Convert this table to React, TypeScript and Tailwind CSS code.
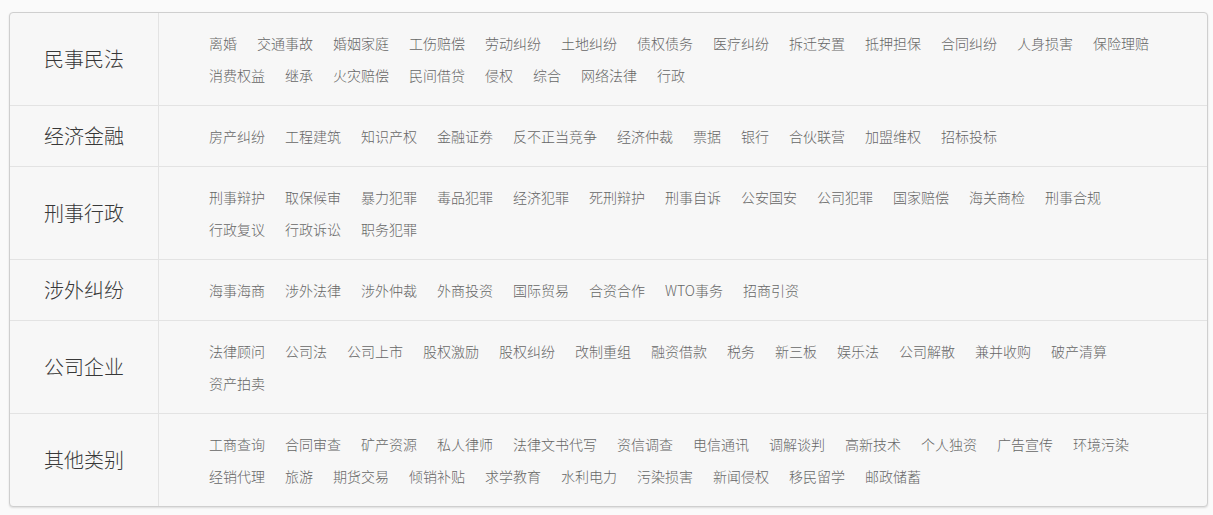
const categories: { name: string; tags: string[] }[] = [
  {
    name: '民事民法',
    tags: ['离婚', '交通事故', '婚姻家庭', '工伤赔偿', '劳动纠纷', '土地纠纷', '债权债务', '医疗纠纷', '拆迁安置', '抵押担保', '合同纠纷', '人身损害', '保险理赔', '消费权益', '继承', '火灾赔偿', '民间借贷', '侵权', '综合', '网络法律', '行政'],
  },
  {
    name: '经济金融',
    tags: ['房产纠纷', '工程建筑', '知识产权', '金融证券', '反不正当竞争', '经济仲裁', '票据', '银行', '合伙联营', '加盟维权', '招标投标'],
  },
  {
    name: '刑事行政',
    tags: ['刑事辩护', '取保候审', '暴力犯罪', '毒品犯罪', '经济犯罪', '死刑辩护', '刑事自诉', '公安国安', '公司犯罪', '国家赔偿', '海关商检', '刑事合规', '行政复议', '行政诉讼', '职务犯罪'],
  },
  {
    name: '涉外纠纷',
    tags: ['海事海商', '涉外法律', '涉外仲裁', '外商投资', '国际贸易', '合资合作', 'WTO事务', '招商引资'],
  },
  {
    name: '公司企业',
    tags: ['法律顾问', '公司法', '公司上市', '股权激励', '股权纠纷', '改制重组', '融资借款', '税务', '新三板', '娱乐法', '公司解散', '兼并收购', '破产清算', '资产拍卖'],
  },
  {
    name: '其他类别',
    tags: ['工商查询', '合同审查', '矿产资源', '私人律师', '法律文书代写', '资信调查', '电信通讯', '调解谈判', '高新技术', '个人独资', '广告宣传', '环境污染', '经销代理', '旅游', '期货交易', '倾销补贴', '求学教育', '水利电力', '污染损害', '新闻侵权', '移民留学', '邮政储蓄'],
  },
];

export default function App() {
  return (
    <div className="min-h-[515px] bg-[#fafafa] pt-[12px] pl-[9px] font-['Noto_Sans_CJK_SC','Noto_Sans',sans-serif]">
      <div className="w-[1199px] overflow-hidden rounded-[4px] border border-[#cfcfcf] bg-[#f7f7f7] shadow-[0_1px_2px_rgba(0,0,0,0.12)]">
        {categories.map((cat, i) => (
          <div key={cat.name} className={`flex ${i > 0 ? 'border-t border-[#e3e3e3]' : ''}`}>
            <div className="flex w-[149px] shrink-0 items-center justify-center border-r border-[#e3e3e3] pb-[1px] text-[20px] font-light text-[#383838]">
              {cat.name}
            </div>
            <div className="flex flex-1 flex-wrap pt-[14px] pb-[14px] pl-[50px] pr-[28px]">
              {cat.tags.map((tag) => (
                <span key={tag} className="mr-5 text-[14px] font-light leading-[32px] text-[#666] whitespace-nowrap">
                  {tag}
                </span>
              ))}
            </div>
          </div>
        ))}
      </div>
    </div>
  );
}
